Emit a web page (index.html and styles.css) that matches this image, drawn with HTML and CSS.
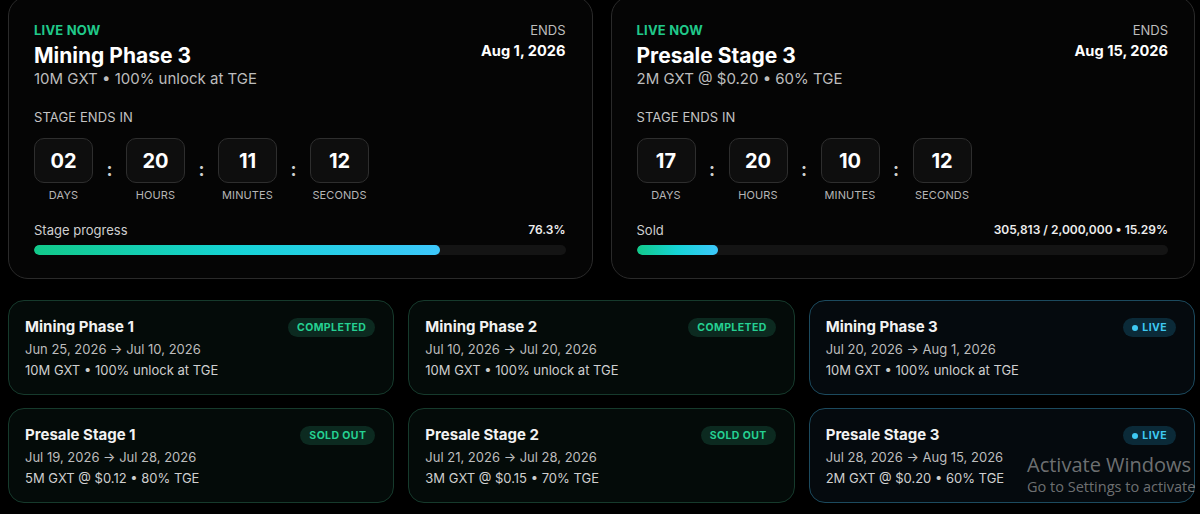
FILE: index.html
```html
<!DOCTYPE html>
<html>
<head>
<meta charset="utf-8">
<link rel="stylesheet" href="styles.css">
</head>
<body>
<div class="page">
  <div class="hero-row">
    <section class="hero">
      <div class="hero-head">
        <div>
          <div class="live-now">LIVE NOW</div>
          <h2 class="hero-title">Mining Phase 3</h2>
          <div class="hero-sub">10M GXT • 100% unlock at TGE</div>
        </div>
        <div class="ends">
          <div class="ends-label">ENDS</div>
          <div class="ends-date">Aug 1, 2026</div>
        </div>
      </div>
      <div class="stage-label">STAGE ENDS IN</div>
      <div class="countdown">
        <div class="unit"><div class="box">02</div><div class="unit-label">DAYS</div></div>
        <div class="colon">:</div>
        <div class="unit"><div class="box">20</div><div class="unit-label">HOURS</div></div>
        <div class="colon">:</div>
        <div class="unit"><div class="box">11</div><div class="unit-label">MINUTES</div></div>
        <div class="colon">:</div>
        <div class="unit"><div class="box">12</div><div class="unit-label">SECONDS</div></div>
      </div>
      <div class="progress-head"><span>Stage progress</span><b>76.3%</b></div>
      <div class="track"><div class="fill" style="width:76.3%"></div></div>
    </section>
    <section class="hero">
      <div class="hero-head">
        <div>
          <div class="live-now">LIVE NOW</div>
          <h2 class="hero-title">Presale Stage 3</h2>
          <div class="hero-sub">2M GXT @ $0.20 • 60% TGE</div>
        </div>
        <div class="ends">
          <div class="ends-label">ENDS</div>
          <div class="ends-date">Aug 15, 2026</div>
        </div>
      </div>
      <div class="stage-label">STAGE ENDS IN</div>
      <div class="countdown">
        <div class="unit"><div class="box">17</div><div class="unit-label">DAYS</div></div>
        <div class="colon">:</div>
        <div class="unit"><div class="box">20</div><div class="unit-label">HOURS</div></div>
        <div class="colon">:</div>
        <div class="unit"><div class="box">10</div><div class="unit-label">MINUTES</div></div>
        <div class="colon">:</div>
        <div class="unit"><div class="box">12</div><div class="unit-label">SECONDS</div></div>
      </div>
      <div class="progress-head"><span>Sold</span><b>305,813 / 2,000,000 • 15.29%</b></div>
      <div class="track"><div class="fill" style="width:15.29%"></div></div>
    </section>
  </div>

  <div class="stages">
    <div class="stage done">
      <div class="stage-top"><div class="stage-name">Mining Phase 1</div><span class="badge green">COMPLETED</span></div>
      <div class="stage-dates">Jun 25, 2026 → Jul 10, 2026</div>
      <div class="stage-info">10M GXT • 100% unlock at TGE</div>
    </div>
    <div class="stage done">
      <div class="stage-top"><div class="stage-name">Mining Phase 2</div><span class="badge green">COMPLETED</span></div>
      <div class="stage-dates">Jul 10, 2026 → Jul 20, 2026</div>
      <div class="stage-info">10M GXT • 100% unlock at TGE</div>
    </div>
    <div class="stage live">
      <div class="stage-top"><div class="stage-name">Mining Phase 3</div><span class="badge blue"><i class="dot"></i>LIVE</span></div>
      <div class="stage-dates">Jul 20, 2026 → Aug 1, 2026</div>
      <div class="stage-info">10M GXT • 100% unlock at TGE</div>
    </div>
    <div class="stage done">
      <div class="stage-top"><div class="stage-name">Presale Stage 1</div><span class="badge green">SOLD OUT</span></div>
      <div class="stage-dates">Jul 19, 2026 → Jul 28, 2026</div>
      <div class="stage-info">5M GXT @ $0.12 • 80% TGE</div>
    </div>
    <div class="stage done">
      <div class="stage-top"><div class="stage-name">Presale Stage 2</div><span class="badge green">SOLD OUT</span></div>
      <div class="stage-dates">Jul 21, 2026 → Jul 28, 2026</div>
      <div class="stage-info">3M GXT @ $0.15 • 70% TGE</div>
    </div>
    <div class="stage live">
      <div class="stage-top"><div class="stage-name">Presale Stage 3</div><span class="badge blue"><i class="dot"></i>LIVE</span></div>
      <div class="stage-dates">Jul 28, 2026 → Aug 15, 2026</div>
      <div class="stage-info">2M GXT @ $0.20 • 60% TGE</div>
    </div>
  </div>
</div>
<div class="watermark">
  <div class="wm-title">Activate Windows</div>
  <div class="wm-sub">Go to Settings to activate</div>
</div>
</body>
</html>
```

FILE: styles.css
```css
* { box-sizing: border-box; }
html, body { margin: 0; padding: 0; background: #000; overflow: hidden; }
body { font-family: Inter, "Noto Sans", sans-serif; color: #fff; height: 514px; position: relative; }

.page { margin: -4px 0 0 8px; width: 1187px; }

.hero-row { display: grid; grid-template-columns: 1fr 1fr; gap: 18px; }
.hero {
  background: #050505;
  border: 1px solid #2a2a2a;
  border-radius: 20px;
  padding: 25px 26px 23px 25px;
}
.hero-head { display: flex; justify-content: space-between; align-items: flex-start; }
.live-now { color: #20c98a; font-size: 13px; font-weight: 700; line-height: 16px; letter-spacing: 0.2px; }
.hero-title { margin: 4px 0 0; font-size: 21px; font-weight: 700; line-height: 28px; }
.hero-sub { color: #bdbdbd; font-size: 15px; line-height: 20px; margin-top: -1px; }
.ends { text-align: right; }
.ends-label { color: #bdbdbd; font-size: 13px; line-height: 16px; }
.ends-date { font-size: 14.6px; font-weight: 700; line-height: 20px; margin-top: 3px; }

.stage-label { color: #c4c4c4; font-size: 13px; line-height: 16px; margin-top: 20px; letter-spacing: 0.1px; }
.countdown { display: flex; align-items: center; gap: 12px; margin-top: 13px; }
.unit { display: flex; flex-direction: column; align-items: center; width: 59px; }
.box {
  width: 59px; height: 45px;
  background: #0e0e0e;
  border: 1px solid #2e2e2e;
  border-radius: 10px;
  display: flex; align-items: center; justify-content: center;
  font-size: 20px; font-weight: 700;
}
.unit-label { color: #b5b5b5; font-size: 11px; line-height: 14px; margin-top: 5px; letter-spacing: 0.1px; }
.colon { width: 9px; text-align: center; color: #cfcfcf; font-size: 18px; font-weight: 700; line-height: 20px; }

.progress-head { display: flex; justify-content: space-between; align-items: center; margin-top: 20px; line-height: 16px; }
.progress-head span { color: #cfcfcf; font-size: 13px; }
.progress-head b { font-size: 12px; font-weight: 600; color: #eee; }
.track { height: 10px; background: #141414; border-radius: 999px; margin-top: 7px; overflow: hidden; }
.fill { height: 100%; border-radius: 999px; background: linear-gradient(90deg, #12c98a, #16d4d6 50%, #3dc7fb); }

.stages { display: grid; grid-template-columns: repeat(3, 1fr); column-gap: 14px; row-gap: 13px; margin-top: 21px; }
.stage { border-radius: 16px; padding: 16px 18px 15px 16px; height: 95px; }
.stage.done { background: #040b09; border: 1px solid #163a2c; }
.stage.live { background: #050a0e; border: 1px solid #1c4a5e; }
.stage-top { display: flex; justify-content: space-between; align-items: flex-start; }
.stage-name { font-size: 15px; font-weight: 700; line-height: 20px; color: #f2f2f2; }
.badge {
  display: inline-flex; align-items: center; gap: 4px;
  height: 19px; margin-top: 1px;
  padding: 0 9px; border-radius: 999px;
  font-size: 10.5px; font-weight: 700; letter-spacing: 0.4px;
}
.badge.green { background: #0c2a20; color: #25d092; }
.badge.blue { background: #0b2a38; color: #3ec9f2; }
.dot { width: 6px; height: 6px; border-radius: 50%; background: #3ec9f2; display: inline-block; }
.stage-dates { color: #bdbdbd; font-size: 13px; line-height: 18px; margin-top: 3px; }
.stage-info { color: #cfcfcf; font-size: 13px; line-height: 18px; margin-top: 3px; }

.watermark { position: absolute; left: 1027px; top: 452px; white-space: nowrap; font-family: "Open Sans", "Noto Sans", sans-serif; color: rgba(200,200,200,0.55); }
.wm-title { font-size: 20px; line-height: 26px; }
.wm-sub { font-size: 14.5px; line-height: 20px; margin-top: -1px; }
```
